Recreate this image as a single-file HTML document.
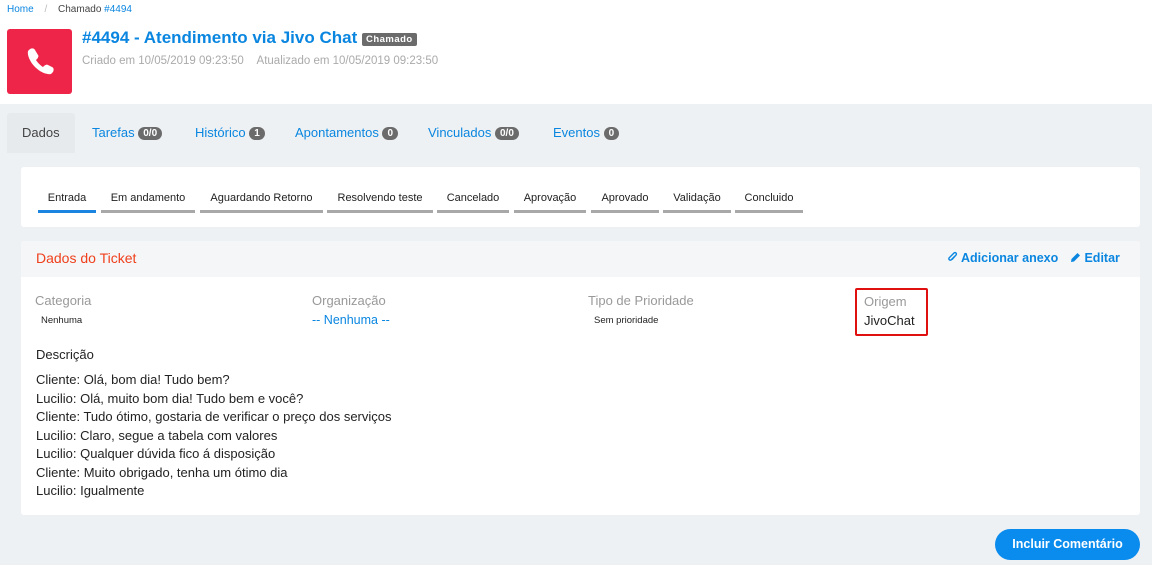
<!DOCTYPE html>
<html><head><meta charset="utf-8"><style>
*{box-sizing:border-box;margin:0;padding:0}
body{width:1152px;height:565px;overflow:hidden;background:#eef1f3;font-family:"Liberation Sans",sans-serif;position:relative}
.top{position:absolute;left:0;top:0;width:1152px;height:104px;background:#fff}
.a{position:absolute;white-space:nowrap}
.blue{color:#0a86e0}
.badge{display:inline-block;background:#6b6b6b;color:#fff;font-size:10px;font-weight:bold;border-radius:7px;padding:1px 5px;vertical-align:1px}
.card{position:absolute;background:#fff;border-radius:3px}
.step{position:absolute;top:192px;font-size:11px;color:#222;text-align:center;border-bottom:3px solid #a8a8a8;height:21px;line-height:12px}
.lbl{font-size:13px;color:#999}
.desc{font-size:13px;color:#222;line-height:18.5px}
</style></head><body>
<div class="top"></div>
<div class="a" style="left:7px;top:4px;font-size:10px;color:#444"><span class="blue">Home</span> <span style="color:#bbb;margin:0 8px">/</span> Chamado <span class="blue">#4494</span></div>
<div class="a" style="left:7px;top:29px;width:65px;height:65px;background:#ee2448;border-radius:3px">
<svg width="65" height="65" viewBox="0 0 65 65"><path d="M28 21c-1-2-3-2-5-1l-2 2c-1 4 2 11 7 16s12 8 16 7l2-2c1-2 1-4-1-5l-4-2c-1-1-3 0-4 1l-1 1c-2-1-6-5-7-7l1-1c1-1 2-3 1-4z" fill="#fff"/></svg></div>
<div class="a" style="left:82px;top:28px;font-size:17px;font-weight:bold;color:#0a86e0">#4494 - Atendimento via Jivo Chat <span class="badge" style="font-size:9.5px;border-radius:2px;letter-spacing:.5px;padding:1px 4px">Chamado</span></div>
<div class="a" style="left:82px;top:55px;font-size:11.5px;color:#aaa">Criado em 10/05/2019 09:23:50 &nbsp;&nbsp;&nbsp;Atualizado em 10/05/2019 09:23:50</div>
<div class="a" style="left:7px;top:113px;width:68px;height:40px;background:#e6eaed;border-radius:3px 3px 0 0"></div>
<div class="a" style="left:22px;top:125px;font-size:13px;color:#444">Dados</div>
<div class="a blue" style="left:92px;top:125px;font-size:13px">Tarefas <span class="badge">0/0</span></div>
<div class="a blue" style="left:195px;top:125px;font-size:13px">Histórico <span class="badge">1</span></div>
<div class="a blue" style="left:295px;top:125px;font-size:13px">Apontamentos <span class="badge">0</span></div>
<div class="a blue" style="left:428px;top:125px;font-size:13px">Vinculados <span class="badge">0/0</span></div>
<div class="a blue" style="left:553px;top:125px;font-size:13px">Eventos <span class="badge">0</span></div>
<div class="card" style="left:21px;top:167px;width:1119px;height:60px"></div>
<div class="step" style="left:38px;width:58px;border-color:#1a84e0">Entrada</div>
<div class="step" style="left:101px;width:94px">Em andamento</div>
<div class="step" style="left:200px;width:123px">Aguardando Retorno</div>
<div class="step" style="left:327px;width:106px">Resolvendo teste</div>
<div class="step" style="left:437px;width:72px">Cancelado</div>
<div class="step" style="left:514px;width:72px">Aprovação</div>
<div class="step" style="left:591px;width:68px">Aprovado</div>
<div class="step" style="left:663px;width:68px">Validação</div>
<div class="step" style="left:735px;width:68px">Concluido</div>
<div class="card" style="left:21px;top:241px;width:1119px;height:274px;overflow:hidden">
<div style="height:36px;background:#f4f6f8"></div></div>
<div class="a" style="left:36px;top:250px;font-size:14px;color:#f0401c">Dados do Ticket</div>
<div class="a blue" style="left:947px;top:251px;font-size:12.5px;font-weight:bold">
<svg width="11" height="12" viewBox="0 0 11 12" style="vertical-align:-1px"><path d="M8 5L4 9a1.5 1.5 0 01-2-2l5-5a1 1 0 012 2L5 8.5" fill="none" stroke="#0a86e0" stroke-width="1.4"/></svg> Adicionar anexo</div>
<div class="a blue" style="left:1070px;top:251px;font-size:12.5px;font-weight:bold">
<svg width="11" height="11" viewBox="0 0 11 11" style="vertical-align:-1px"><path d="M1 10l.5-3 6-6 2.5 2.5-6 6z" fill="#0a86e0"/></svg> Editar</div>
<div class="a lbl" style="left:35px;top:293px">Categoria</div>
<div class="a" style="left:41px;top:315px;font-size:9.5px;color:#222">Nenhuma</div>
<div class="a lbl" style="left:312px;top:293px">Organização</div>
<div class="a blue" style="left:312px;top:313px;font-size:12.5px">-- Nenhuma --</div>
<div class="a lbl" style="left:588px;top:293px">Tipo de Prioridade</div>
<div class="a" style="left:594px;top:315px;font-size:9.5px;color:#222">Sem prioridade</div>
<div class="a" style="left:855px;top:288px;width:73px;height:48px;border:2px solid #e01010;border-radius:2px"></div>
<div class="a lbl" style="left:864px;top:294px">Origem</div>
<div class="a" style="left:864px;top:313px;font-size:13px;color:#222">JivoChat</div>
<div class="a" style="left:36px;top:347px;font-size:13px;color:#222">Descrição</div>
<div class="a desc" style="left:36px;top:371px">Cliente: Olá, bom dia! Tudo bem?<br>Lucilio: Olá, muito bom dia! Tudo bem e você?<br>Cliente: Tudo ótimo, gostaria de verificar o preço dos serviços<br>Lucilio: Claro, segue a tabela com valores<br>Lucilio: Qualquer dúvida fico á disposição<br>Cliente: Muito obrigado, tenha um ótimo dia<br>Lucilio: Igualmente</div>
<div class="a" style="left:995px;top:529px;width:145px;height:31px;background:#0a8bee;border-radius:16px;color:#fff;font-size:12.5px;font-weight:bold;text-align:center;line-height:31px">Incluir Comentário</div>
</body></html>
